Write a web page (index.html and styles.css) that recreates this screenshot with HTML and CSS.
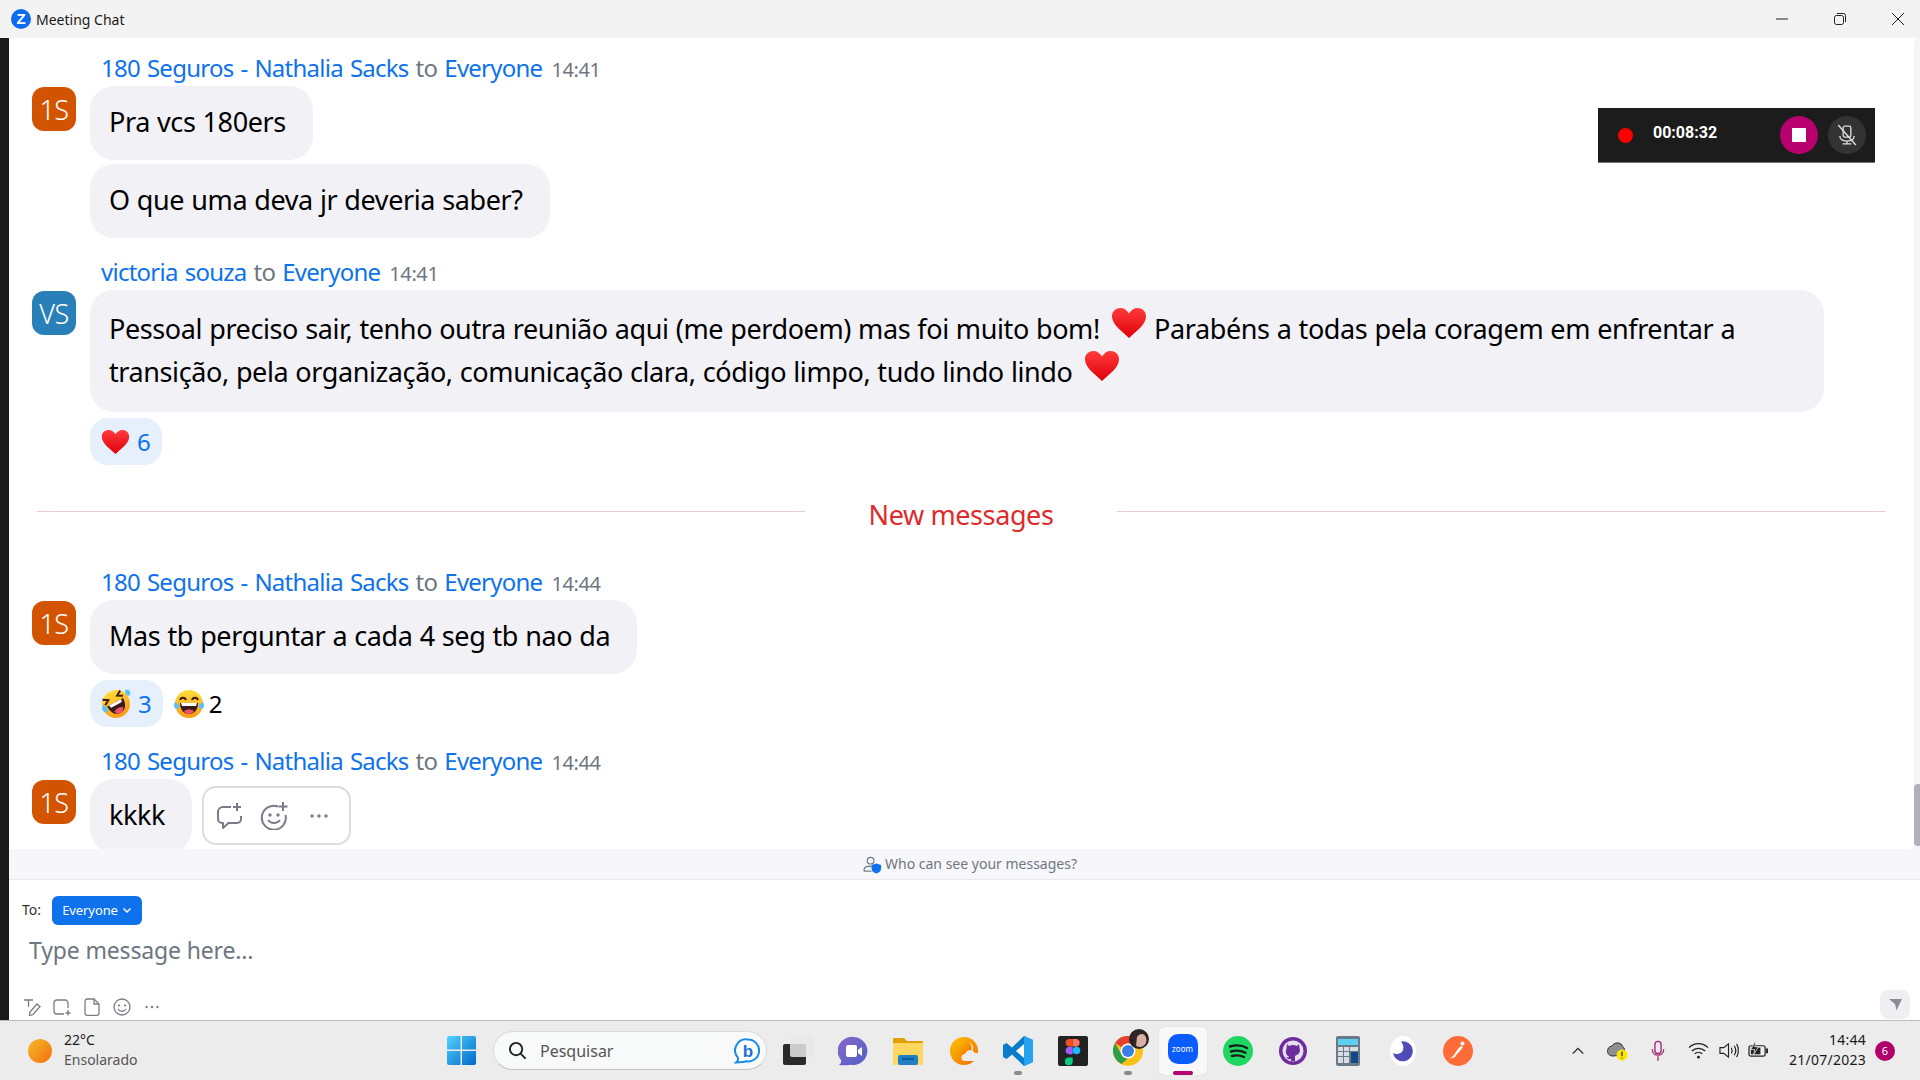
FILE: index.html
```html
<!DOCTYPE html>
<html lang="en">
<head>
<meta charset="utf-8">
<title>Meeting Chat</title>
<link rel="stylesheet" href="styles.css">
</head>
<body>
<svg class="defs" width="0" height="0" aria-hidden="true">
  <defs>
    <linearGradient id="gHeart" x1="0" y1="0" x2="0" y2="1"><stop offset="0" stop-color="#ff3b3b"/><stop offset="1" stop-color="#dd0008"/></linearGradient>
    <linearGradient id="gFace" x1="0" y1="0" x2="0" y2="1"><stop offset="0" stop-color="#ffdd3a"/><stop offset="1" stop-color="#fb9a14"/></linearGradient>
    <symbol id="heart" viewBox="0 0 36 32"><path d="M18 31C12 25 1 18 1 9.500C1 4 5 1 9.500 1C13 1 16 3 18 6.500C20 3 23 1 26.500 1C31 1 35 4 35 9.500C35 18 24 25 18 31Z" fill="url(#gHeart)"/></symbol>
  </defs>
</svg>
<div class="app">
  <header class="titlebar">
    <div class="title-left">
      <svg class="zlogo" viewBox="0 0 20 20"><circle cx="10" cy="10" r="10" fill="#0b6cf0"/><text x="10" y="15" text-anchor="middle" class="zlogo-t">Z</text></svg>
      <span>Meeting Chat</span>
    </div>
    <div class="win-controls">
      <svg viewBox="0 0 14 14"><path d="M1 7h12" stroke="#222" stroke-width="1"/></svg>
      <svg viewBox="0 0 14 14"><rect x="1.500" y="3.500" width="9" height="9" rx="2" fill="none" stroke="#222"/><path d="M4 1.500h6.500a2 2 0 0 1 2 2V10" fill="none" stroke="#222"/></svg>
      <svg viewBox="0 0 14 14"><path d="M1 1l12 12M13 1L1 13" stroke="#222" stroke-width="1"/></svg>
    </div>
  </header>

  <main class="main">
    <div class="strip"></div>
    <section class="chat">
      <div class="messages">
        <article class="group">
          <div class="head"><span class="name">180 Seguros - Nathalia Sacks</span> <span class="to">to</span> <span class="name">Everyone</span> <span class="time">14:41</span></div>
          <div class="row">
            <div class="avatar orange">1S</div>
            <div class="col">
              <div class="bubble">Pra vcs 180ers</div>
              <div class="bubble">O que uma deva jr deveria saber?</div>
            </div>
          </div>
        </article>

        <article class="group">
          <div class="head"><span class="name">victoria souza</span> <span class="to">to</span> <span class="name">Everyone</span> <span class="time">14:41</span></div>
          <div class="row">
            <div class="avatar blue">VS</div>
            <div class="col col-full">
              <div class="bubble bubble-wide">Pessoal preciso sair, tenho outra reunião aqui (me perdoem) mas foi muito bom! <svg class="inline-heart"><use href="#heart"/></svg> Parabéns a todas pela coragem em enfrentar a transição, pela organização, comunicação clara, código limpo, tudo lindo lindo <svg class="inline-heart"><use href="#heart"/></svg></div>
              <div class="reactions">
                <div class="reaction active"><svg class="r-heart"><use href="#heart"/></svg><span>6</span></div>
              </div>
            </div>
          </div>
        </article>

        <div class="divider"><i></i><span>New messages</span><i></i></div>

        <article class="group group-new">
          <div class="head"><span class="name">180 Seguros - Nathalia Sacks</span> <span class="to">to</span> <span class="name">Everyone</span> <span class="time">14:44</span></div>
          <div class="row">
            <div class="avatar orange">1S</div>
            <div class="col">
              <div class="bubble">Mas tb perguntar a cada 4 seg tb nao da</div>
              <div class="reactions">
                <div class="reaction active">
                  <svg class="r-emoji" viewBox="0 0 30 30"><g transform="rotate(-28 15 15)"><circle cx="15" cy="15" r="14" fill="url(#gFace)"/><path d="M6 13h18c0 8-4 12-9 12s-9-4-9-12Z" fill="#3a1a1a"/><path d="M8 13h14l-1 3H9Z" fill="#fff"/><path d="M10 21c3-2 7-2 10 0-1 3-3 4-5 4s-4-1-5-4Z" fill="#f0506e"/><path d="M5 5l5 3-5 3M25 5l-5 3 5 3" fill="none" stroke="#3a1a1a" stroke-width="2"/></g><path d="M2 16c-2 4 0 8 4 7 2-2 0-5-4-7ZM24 1c4-1 6 1 5 5-2 2-5 0-5-5Z" fill="#5ec0f5"/></svg>
                  <span>3</span>
                </div>
                <div class="reaction">
                  <svg class="r-emoji" viewBox="0 0 30 30"><circle cx="15" cy="15" r="14" fill="url(#gFace)"/><path d="M6 11c1-3 5-3 6 0M18 11c1-3 5-3 6 0" fill="none" stroke="#3a1a1a" stroke-width="2"/><path d="M6 14h18c0 7-4 11-9 11s-9-4-9-11Z" fill="#3a1a1a"/><path d="M7 14h16l-1 3H8Z" fill="#fff"/><path d="M10 22c3-2 7-2 10 0-1 2-3 3-5 3s-4-1-5-3Z" fill="#f0506e"/><path d="M1 13c-2 3-1 7 2 7s4-4-2-7ZM29 13c2 3 1 7-2 7s-4-4 2-7Z" fill="#5ec0f5"/></svg>
                  <span class="plain">2</span>
                </div>
              </div>
            </div>
          </div>
        </article>

        <article class="group">
          <div class="head"><span class="name">180 Seguros - Nathalia Sacks</span> <span class="to">to</span> <span class="name">Everyone</span> <span class="time">14:44</span></div>
          <div class="row">
            <div class="avatar orange">1S</div>
            <div class="col col-row">
              <div class="bubble">kkkk</div>
              <div class="actions">
                <svg viewBox="0 0 28 28"><path d="M16 5H8a5 5 0 0 0-5 5v7a4 4 0 0 0 4 4h1v5l5.500-5H22a4 4 0 0 0 4-4v-3" fill="none" stroke="#7a7a88" stroke-width="2" stroke-linejoin="round"/><path d="M22 1v8M18 5h8" stroke="#7a7a88" stroke-width="2"/></svg>
                <svg viewBox="0 0 28 28"><path d="M18 4.500A12 12 0 1 0 25.500 13" fill="none" stroke="#7a7a88" stroke-width="2"/><circle cx="10" cy="13" r="1.700" fill="#7a7a88"/><circle cx="18" cy="13" r="1.700" fill="#7a7a88"/><path d="M8 18c3 4 9 4 12 0" fill="none" stroke="#7a7a88" stroke-width="2"/><path d="M23 0v9M18.500 4.500h9" stroke="#7a7a88" stroke-width="2"/></svg>
                <svg viewBox="0 0 28 28"><circle cx="7" cy="14" r="1.700" fill="#7a7a88"/><circle cx="14" cy="14" r="1.700" fill="#7a7a88"/><circle cx="21" cy="14" r="1.700" fill="#7a7a88"/></svg>
              </div>
            </div>
          </div>
        </article>

        <div class="scroll-track"><div class="scroll-thumb"></div></div>
      </div>

      <div class="notice">
        <svg viewBox="0 0 20 20"><circle cx="8" cy="6" r="3.500" fill="none" stroke="#6e7680" stroke-width="1.200"/><path d="M1 17c0-3 2-5 5-5h3" fill="none" stroke="#6e7680" stroke-width="1.200"/><path d="M1 17h8" stroke="#6e7680" stroke-width="1.200"/><path d="M14 9l5 1.500v4c0 2.500-2 4-5 5-3-1-5-2.500-5-5v-4Z" fill="#0e72ed"/></svg>
        <span>Who can see your messages?</span>
      </div>

      <div class="composer">
        <div class="to-row">
          <span class="to-label">To:</span>
          <div class="to-btn">Everyone <svg viewBox="0 0 10 10"><path d="M1.500 3.500L5 7l3.500-3.500" fill="none" stroke="#fff" stroke-width="1.500"/></svg></div>
        </div>
        <div class="input">Type message here...</div>
        <div class="tool-row">
          <div class="tools">
            <svg viewBox="0 0 18 18"><path d="M1 2h9M5.500 2v7" stroke="#7a7a88" stroke-width="1.300" fill="none"/><path d="M14 6l3 2.500-7 8-3.500 1 .5-3.500Z" fill="none" stroke="#7a7a88" stroke-width="1.300"/></svg>
            <svg viewBox="0 0 18 18"><path d="M15 10V5a3 3 0 0 0-3-3H4a3 3 0 0 0-3 3v8a3 3 0 0 0 3 3h7" fill="none" stroke="#7a7a88" stroke-width="1.300"/><path d="M15 12v5.500M12.500 15h5" stroke="#7a7a88" stroke-width="1.300"/></svg>
            <svg viewBox="0 0 18 18"><path d="M4 1h7l5 5v9a2.500 2.500 0 0 1-2.500 2.500h-9A2.500 2.500 0 0 1 2 15V3.500A2.500 2.500 0 0 1 4 1Z" fill="none" stroke="#7a7a88" stroke-width="1.300"/><path d="M11 1v5h5" fill="none" stroke="#7a7a88" stroke-width="1.300"/></svg>
            <svg viewBox="0 0 18 18"><circle cx="9" cy="9" r="8" fill="none" stroke="#7a7a88" stroke-width="1.300"/><circle cx="6" cy="7.500" r="1.100" fill="#7a7a88"/><circle cx="12" cy="7.500" r="1.100" fill="#7a7a88"/><path d="M5 11c2 3 6 3 8 0" fill="none" stroke="#7a7a88" stroke-width="1.300"/></svg>
            <svg viewBox="0 0 18 18"><circle cx="3.500" cy="9" r="1.200" fill="#7a7a88"/><circle cx="9" cy="9" r="1.200" fill="#7a7a88"/><circle cx="14.500" cy="9" r="1.200" fill="#7a7a88"/></svg>
          </div>
          <div class="send"><svg viewBox="0 0 16 16"><path d="M1 2h14L9 14l-1.500-6.500Z" fill="#8b8b98"/></svg></div>
        </div>
      </div>
    </section>
  </main>

  <footer class="taskbar">
    <div class="tb-weather">
      <div class="sun"></div>
      <div class="weather-text"><div class="w1">22°C</div><div class="w2">Ensolarado</div></div>
    </div>
    <svg class="winlogo" viewBox="0 0 29 29">
      <defs><linearGradient id="gWin" x1="0" y1="0" x2="1" y2="1"><stop offset="0" stop-color="#52d2ff"/><stop offset="1" stop-color="#0068c8"/></linearGradient></defs>
      <path d="M0 2a2 2 0 0 1 2-2h11.500v13.500H0ZM15 0h12a2 2 0 0 1 2 2v11.500H15ZM0 15h13.500v14H2a2 2 0 0 1-2-2ZM15 15h14v12a2 2 0 0 1-2 2H15Z" fill="url(#gWin)"/>
    </svg>
    <div class="search">
      <svg class="mag" viewBox="0 0 20 20"><circle cx="8.500" cy="8.500" r="6.500" fill="none" stroke="#222" stroke-width="2"/><path d="M13 13l5.500 5.500" stroke="#222" stroke-width="2"/></svg>
      <span class="search-t">Pesquisar</span>
      <svg class="bing" viewBox="0 0 26 26"><path d="M14 1.500a11 11 0 1 1-2 21.800c-3 .8-6 1-10 1.200 2-1.500 2.500-3 1.800-5A11 11 0 0 1 14 1.500Z" fill="#fff" stroke="#1a8be8" stroke-width="2"/><text x="14" y="19" text-anchor="middle" class="bing-t">b</text></svg>
    </div>
    <svg class="taskview" viewBox="0 0 30 28">
      <rect x="0" y="7" width="23" height="21" rx="2" fill="#2a2a2a"/>
      <rect x="7" y="0" width="23" height="20" rx="2" fill="#e8e8e8" fill-opacity=".85"/>
    </svg>
    <div class="apps">
      <div class="app-slot"><svg viewBox="0 0 30 30"><defs><linearGradient id="gMeet" x1="0" y1="0" x2="1" y2="1"><stop offset="0" stop-color="#8a66c8"/><stop offset="1" stop-color="#4d62c8"/></linearGradient></defs><path d="M15.500 1a14 14 0 1 1-3 27.700C9 29.500 5 29.500 1 29c2-1.500 2.500-3 2-5A14 14 0 0 1 15.500 1Z" fill="url(#gMeet)"/><rect x="8" y="9" width="11" height="12" rx="2" fill="#fff"/><path d="M20 14l4-3v9l-4-3Z" fill="#fff"/></svg></div>
      <div class="app-slot"><svg viewBox="0 0 30 30"><path d="M0 3a1 1 0 0 1 1-1h10l3 3h15a1 1 0 0 1 1 1v4H0Z" fill="#e0a100"/><path d="M0 7h30v21a1 1 0 0 1-1 1H1a1 1 0 0 1-1-1Z" fill="#ffd660"/><rect x="5" y="19" width="20" height="10" rx="2" fill="#1f7fc4"/><path d="M9 23h12" stroke="#0b4f8a" stroke-width="1.500"/></svg></div>
      <div class="app-slot weather-app"><svg viewBox="0 0 30 30"><defs><linearGradient id="gW" x1="0" y1="0" x2="1" y2="1"><stop offset="0" stop-color="#ffc400"/><stop offset="1" stop-color="#f06a00"/></linearGradient></defs><circle cx="14" cy="15" r="14" fill="url(#gW)"/><circle cx="16" cy="12.500" r="7" fill="#fff"/><circle cx="14" cy="12" r="7.800" fill="url(#gW)"/><path d="M15 25a3.500 3.500 0 0 1 0-7 5.500 5.500 0 0 1 10-1 4 4 0 0 1 1 8Z" fill="#ececec"/></svg></div>
      <div class="app-slot running"><svg viewBox="0 0 30 30"><path d="M21 0l9 4v22l-9 4L9 18.500 3.500 23 0 21V9l3.500-2L9 11.500Z" fill="#0a7ccc"/><path d="M21 0l9 4v22l-9 4Z" fill="#27a2ee"/><path d="M21 8v14l-8-7Z" fill="#fff"/></svg></div>
      <div class="app-slot"><svg viewBox="0 0 30 30"><rect width="30" height="30" rx="2" fill="#222"/><circle cx="18.500" cy="14.500" r="3.800" fill="#1abcfe"/><path d="M10.800 21.500h3.900v3.800a3.900 3.900 0 1 1-3.900-3.800Z" fill="#0acf83"/><path d="M10.800 10.800h3.900v7.500h-3.900a3.800 3.800 0 0 1 0-7.500Z" fill="#a259ff"/><path d="M10.800 3h3.900v7.500h-3.900a3.800 3.800 0 0 1 0-7.500Z" fill="#f24e1e"/><path d="M14.700 3h3.800a3.800 3.800 0 0 1 0 7.500h-3.800Z" fill="#ff7262"/></svg></div>
      <div class="app-slot running chrome-slot"><svg viewBox="0 0 30 30"><circle cx="15" cy="15" r="15" fill="#fbc116"/><path d="M15 0a15 15 0 0 1 13 7.500H15a7.500 7.500 0 0 0-6.500 3.800L2 7A15 15 0 0 1 15 0Z" fill="#e3412d"/><path d="M2 7l6.500 11.500A7.500 7.500 0 0 0 15 22.500L8.500 28A15 15 0 0 1 2 7Z" fill="#2f9e4a"/><circle cx="15" cy="15" r="7.500" fill="#fff"/><circle cx="15" cy="15" r="6" fill="#3b7ee8"/></svg>
        <svg class="chrome-av" viewBox="0 0 20 20"><circle cx="10" cy="10" r="10" fill="#2b2226"/><ellipse cx="11" cy="11" rx="6.500" ry="7" fill="#d8b0a2"/><path d="M2 10c0-7 10-10 15-4-4-2-7-1-9 2l-1 9Z" fill="#332428"/></svg>
      </div>
      <div class="app-slot active-app"><div class="zoom-tile"><div class="zoom-icon">zoom</div><div class="zoom-line"></div></div></div>
      <div class="app-slot"><svg viewBox="0 0 30 30"><circle cx="15" cy="15" r="15" fill="#1ed760"/><path d="M7 10.500c6-1.800 12-1.300 17 1.500M8 15.500c5-1.400 10-1 14.500 1.300M9 20c4-1 8-.8 12 1" fill="none" stroke="#1a1a1a" stroke-width="2.400" stroke-linecap="round"/></svg></div>
      <div class="app-slot"><svg viewBox="0 0 30 30"><circle cx="15" cy="15" r="14" fill="#6e2d9c"/><circle cx="15" cy="15" r="10.500" fill="#e6e0ee"/><path d="M9 8l2 2a9 9 0 0 1 8 0l2-2 .5 4c1 2 .5 5-2 6.500-1 .5-2 1-2.500 1.500v5h-4v-2c-3 .5-4-.5-5-2 1.500.5 2.500 1 3-.5-3-1-4-5-2.500-8Z" fill="#6e2d9c"/></svg></div>
      <div class="app-slot"><svg class="calc" viewBox="0 0 24 30"><rect width="24" height="30" rx="2" fill="#6a7a86"/><rect x="2" y="3" width="20" height="6" fill="#5dd0f2"/><path d="M2 11h5v4H2ZM8 11h5v4H8ZM14 11h8v4h-8ZM2 16h5v4H2ZM8 16h5v4H8ZM2 21h5v6H2ZM8 21h5v6H8Z" fill="#d8dde2"/><rect x="15" y="16" width="7" height="11" fill="#0f4a86"/></svg></div>
      <div class="app-slot"><svg class="moon" viewBox="0 0 26 30"><ellipse cx="13" cy="15" rx="13" ry="15" fill="#fff"/><path d="M11 5.500A10 10 0 1 1 3 17c3 2 9 1 10-3 1-3 0-6-2-8.500Z" fill="#4f4bb8"/></svg></div>
      <div class="app-slot"><svg viewBox="0 0 30 30"><ellipse cx="15" cy="15" rx="15" ry="15" fill="#ff6c37"/><circle cx="19.500" cy="7.500" r="2" fill="#fff"/><path d="M18 10c-3 2-5 6-7 9l-4 4 5-2 2-3 3-3 3-4Z" fill="#fff"/></svg></div>
    </div>
    <div class="tray">
      <div class="tray-s"><svg viewBox="0 0 16 16"><path d="M2 11l6-6 6 6" fill="none" stroke="#222" stroke-width="1.500"/></svg></div>
      <div class="tray-s"><svg class="od" viewBox="0 0 22 20"><path d="M6 15a5 5 0 0 1-1-10 6 6 0 0 1 11 1c2 1 2 5 0 8Z" fill="#8f8f8f" stroke="#333"/><circle cx="15" cy="14" r="5.500" fill="#ffe600"/><path d="M15 10.500v4.500M15 16.500v1" stroke="#222" stroke-width="1.200"/></svg></div>
      <div class="tray-s tray-last"><svg class="mic" viewBox="0 0 16 24"><rect x="4.500" y="1" width="7" height="14" rx="3.500" fill="none" stroke="#a0246e" stroke-width="1.500"/><path d="M1.500 10c0 9 13 9 13 0M8 18v5" fill="none" stroke="#a0246e" stroke-width="1.500"/></svg></div>
      <div class="tray-n"><svg viewBox="0 0 22 20"><path d="M1 7a14 14 0 0 1 20 0M4 10.500a10 10 0 0 1 14 0M7 13.500a6 6 0 0 1 8 0" fill="none" stroke="#222" stroke-width="1.300"/><circle cx="11" cy="17" r="1.500" fill="#222"/></svg></div>
      <div class="tray-n"><svg viewBox="0 0 22 20"><path d="M2 7h4l5-4v14l-5-4H2Z" fill="none" stroke="#222" stroke-width="1.200"/><path d="M14 7c1 2 1 4 0 6M17 5c2 3 2 7 0 10M19.500 3c2.500 4 2.500 10 0 14" fill="none" stroke="#222" stroke-width="1.200"/></svg></div>
      <div class="tray-n"><svg viewBox="0 0 22 20"><rect x="1" y="5" width="17" height="11" rx="2" fill="none" stroke="#222" stroke-width="1.300"/><path d="M3 7h10v7H3Z" fill="#222"/><path d="M19 8h2v5h-2Z" fill="#222"/><path d="M7 1L3 9h4l-1 5 5-8H7l1-5Z" fill="#222" stroke="#ececec" stroke-width=".8"/></svg></div>
      <div class="clock"><div>14:44</div><div>21/07/2023</div></div>
      <div class="badge">6</div>
    </div>
  </footer>

  <aside class="recorder">
    <div class="rec-dot"></div>
    <div class="rec-time">00:08:32</div>
    <div class="rec-stop"><div class="rec-square"></div></div>
    <div class="rec-mic"><svg viewBox="0 0 20 20"><rect x="6.500" y="2" width="7" height="10" rx="1.500" fill="none" stroke="#ddd" stroke-width="1.200"/><path d="M3.500 11c0 3 3 4.500 6.500 4.500s6.500-1.500 6.500-4.500M10 15.500V18M6 18h8" fill="none" stroke="#ddd" stroke-width="1.200"/><path d="M2 1l16 18" stroke="#ddd" stroke-width="1.300"/></svg></div>
  </aside>
</div>
</body>
</html>
```
FILE: styles.css
```css
* { box-sizing: border-box; }
html, body { margin: 0; height: 100%; }
body { font-family: "Noto Sans", "Open Sans", sans-serif; background: #fff; overflow: hidden; color: #000; }
.defs { position: absolute; }
.app { width: 1920px; height: 1080px; display: flex; flex-direction: column; position: relative; }

.titlebar { height: 38px; flex: none; background: #f3f3f3; display: flex; align-items: center; justify-content: space-between; }
.title-left { display: flex; align-items: center; padding-left: 11px; gap: 5px; font-size: 14px; color: #1a1a1a; }
.zlogo { width: 20px; height: 20px; }
.zlogo-t { font: 700 15px "Liberation Sans", sans-serif; fill: #fff; }
.win-controls { display: flex; gap: 44px; padding-right: 15px; align-items: center; }
.win-controls svg { width: 14px; height: 14px; display: block; }

.main { flex: 1; display: flex; min-height: 0; }
.strip { width: 9px; background: #1a1a1a; flex: none; }
.chat { flex: 1; display: flex; flex-direction: column; min-width: 0; }

.messages { height: 811px; flex: none; overflow: hidden; position: relative; padding-top: 15px; }
.group { padding-left: 23px; margin-bottom: 19px; }
.group-new { margin-bottom: 19px; }
.head { height: 32px; line-height: 30px; padding-left: 69px; margin-bottom: 1px; font-size: 24px; letter-spacing: -.75px; word-spacing: 1.500px; white-space: nowrap; }
.name { color: #0e72ed; }
.to { color: #6e7680; }
.time { color: #6e7680; font-size: 20px; margin-left: 2px; letter-spacing: -.4px; }
.row { display: flex; gap: 14px; align-items: flex-start; }
.avatar { width: 44px; height: 44px; border-radius: 12px; color: #fff; font-size: 27px; display: flex; align-items: center; justify-content: center; flex: none; margin-top: 1px; letter-spacing: -.5px; font-weight: 300; }
.orange { background: #d35400; }
.blue { background: #2980b9; }
.col { display: flex; flex-direction: column; gap: 4px; align-items: flex-start; min-width: 0; }
.col-full { width: 1734px; }
.col-row { flex-direction: row; gap: 10px; }
.bubble { background: #f1f1f6; border-radius: 24px; padding: 14px 27px 16px 19px; font-size: 27px; line-height: 44px; letter-spacing: -.4px; word-spacing: .5px; color: #000; white-space: pre-wrap; }
.bubble-wide { padding: 17px 60px 17px 19px; line-height: 43px; height: 122px; }
.inline-heart { width: 36px; height: 32px; vertical-align: 10px; margin: -20px 0 -10px 4px; overflow: visible; }
.reactions { display: flex; gap: 11px; margin-top: 2px; align-items: center; }
.reaction { height: 47px; border-radius: 18px; display: flex; align-items: center; gap: 7px; padding: 0 11px; font-size: 24px; }
.reaction.active { background: #e6f0fc; color: #0e72ed; }
.reaction + .reaction { padding-left: 0; gap: 5px; }
.plain { color: #000; }
.r-heart { width: 29px; height: 26px; }
.r-emoji { width: 30px; height: 30px; }

.divider { display: flex; align-items: center; gap: 64px; margin: 29px 35px 33px 28px; height: 40px; font-size: 27px; color: #e02b2b; letter-spacing: -.4px; }
.divider i { flex: 1; height: 1px; background: #ecc9cb; margin-top: -6px; }

.actions { margin-top: 7px; height: 59px; width: 149px; border: 2px solid #dcdce4; border-radius: 14px; display: flex; align-items: center; background: #fff; padding-left: 11px; gap: 17px; }
.actions svg { width: 28px; height: 28px; flex: none; }
.scroll-track { position: absolute; top: 0; right: 0; bottom: 0; width: 6px; background: #f5f5f9; border-top-left-radius: 6px; }
.scroll-thumb { margin-top: 746px; height: 62px; background: #b1b1bb; border-radius: 4px 0 0 4px; }

.notice { height: 31px; flex: none; background: #f7f7fb; border-bottom: 1px solid #e8e8ee; display: flex; align-items: center; justify-content: center; gap: 3px; font-size: 14px; color: #6e7680; padding: 0 0 2px 11px; }
.notice svg { width: 19px; height: 19px; margin-top: 3px; }

.composer { flex: 1; display: flex; flex-direction: column; background: #fff; min-height: 0; }
.to-row { display: flex; align-items: center; gap: 11px; padding: 16px 0 0 13px; height: 45px; }
.to-label { font-size: 14px; color: #333; line-height: 18px; margin-top: -1px; }
.to-btn { height: 29px; width: 90px; background: #0e72ed; border-radius: 6px; color: #fff; font-size: 13px; line-height: 26px; padding-bottom: 2px; display: flex; align-items: center; justify-content: center; gap: 4px; letter-spacing: -.1px; }
.to-btn svg { width: 10px; height: 10px; }
.input { height: 34px; line-height: 34px; margin-top: 8px; padding-left: 20px; font-size: 23px; color: #6e7680; letter-spacing: -.15px; }
.tool-row { margin-top: auto; display: flex; justify-content: space-between; align-items: flex-end; padding: 0 10px 1px 14px; }
.tools { display: flex; gap: 12px; margin-bottom: 3px; }
.tools svg { width: 18px; height: 18px; }
.send { width: 30px; height: 29px; border-radius: 8px; background: #efeff3; display: flex; align-items: center; justify-content: center; }
.send svg { width: 15px; height: 15px; }

.taskbar { height: 60px; flex: none; background: #ececec; border-top: 1px solid #bdbdbd; display: flex; align-items: center; }
.tb-weather { width: 447px; flex: none; display: flex; align-items: center; gap: 12px; padding-left: 28px; }
.sun { width: 24px; height: 24px; border-radius: 50%; background: linear-gradient(135deg, #f4bb2c, #f56f0a); }
.weather-text { line-height: 20px; font-size: 14px; margin-top: -2px; }
.w1 { color: #1a1a1a; }
.w2 { color: #555; }
.winlogo { width: 29px; height: 29px; flex: none; }
.search { width: 274px; height: 39px; margin-left: 17px; border-radius: 20px; background: #f8f9f9; border: 1px solid #dcdcdc; border-bottom-color: #c4c4c4; display: flex; align-items: center; padding-left: 14px; flex: none; }
.mag { width: 19px; height: 19px; }
.search-t { margin-left: 13px; font-size: 16px; color: #555; flex: 1; }
.bing { width: 26px; height: 26px; margin-right: 6px; }
.bing-t { font: 700 17px "Liberation Sans", sans-serif; fill: #1a6fd8; }
.taskview { width: 30px; height: 28px; margin-left: 16px; flex: none; }
.apps { display: flex; margin-left: 12px; flex: none; }
.app-slot { width: 55px; height: 59px; display: flex; align-items: center; justify-content: center; position: relative; }
.app-slot > svg { width: 30px; height: 30px; display: block; }
.app-slot > svg.calc { width: 24px; }
.app-slot > svg.moon { width: 26px; }
.weather-app > svg { margin-left: 4px; }
.running::after { content: ""; position: absolute; left: 24px; bottom: 5px; width: 8px; height: 4px; border-radius: 2px; background: #8a8a8a; }
.app-slot > svg.chrome-av { position: absolute; width: 20px; height: 20px; left: 29px; top: 8px; }
.zoom-tile { width: 48px; height: 48px; border-radius: 5px; background: #f8f8f8; box-shadow: 0 0 1px #bbb; position: relative; display: flex; justify-content: center; padding-top: 7px; }
.zoom-icon { width: 30px; height: 30px; border-radius: 10px; background: #0b5cff; color: #fff; font-size: 8px; display: flex; align-items: center; justify-content: center; }
.zoom-line { position: absolute; left: 14px; bottom: 0; width: 20px; height: 4px; border-radius: 2px; background: #b5006f; }
.tray { margin-left: auto; display: flex; align-items: center; flex: none; padding-right: 25px; }
.tray-s { width: 40px; display: flex; justify-content: center; align-items: center; }
.tray-last { margin-right: 5px; }
.tray-s svg { width: 14px; height: 14px; }
.tray-s svg.od { width: 22px; height: 20px; }
.tray-s svg.mic { width: 14px; height: 22px; }
.tray-n { width: 30px; display: flex; justify-content: center; }
.tray-n svg { width: 21px; height: 19px; }
.clock { width: 93px; text-align: right; font-size: 14px; line-height: 20px; color: #1a1a1a; letter-spacing: .25px; margin-top: -2px; }
.badge { width: 20px; height: 20px; margin-left: 9px; border-radius: 50%; background: #b0006a; color: #fff; font-size: 11px; display: flex; align-items: center; justify-content: center; }

.recorder { position: absolute; left: 1598px; top: 108px; width: 277px; height: 55px; background: #1c1c1c; border-bottom: 1px solid #777; display: flex; align-items: center; padding-left: 20px; }
.rec-dot { width: 15px; height: 15px; border-radius: 50%; background: #f00; flex: none; }
.rec-time { margin-left: 20px; margin-top: -5px; color: #fff; font: 700 16px Roboto, sans-serif; width: 63px; white-space: nowrap; }
.rec-stop { margin-left: 64px; width: 38px; height: 38px; border-radius: 50%; background: #b9006f; display: flex; align-items: center; justify-content: center; flex: none; }
.rec-square { width: 14px; height: 14px; background: #fff; }
.rec-mic { margin-left: 10px; width: 38px; height: 38px; border-radius: 50%; background: #333; display: flex; align-items: center; justify-content: center; flex: none; }
.rec-mic svg { width: 22px; height: 22px; }
```
